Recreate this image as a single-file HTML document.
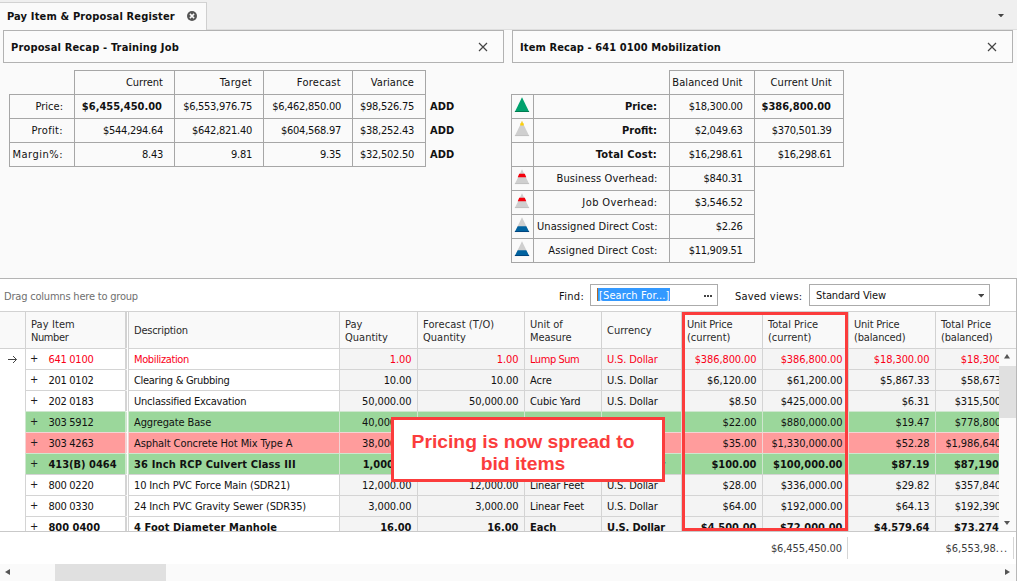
<!DOCTYPE html>
<html>
<head>
<meta charset="utf-8">
<title>Pay Item &amp; Proposal Register</title>
<style>
*{box-sizing:border-box;margin:0;padding:0}
html,body{width:1017px;height:581px;overflow:hidden}
body{position:relative;background:#fafafa;font-family:"DejaVu Sans Condensed","Liberation Sans",sans-serif;font-size:11px;color:#111;line-height:13px}
.abs,.c,.h,.d,.ln{position:absolute}
.b{font-weight:bold}
#strip{left:0;top:0;width:1017px;height:30px;background:#efefef;border-bottom:1px solid #dedede}
#tab{left:0;top:2px;width:207px;height:28px;background:#fafafa;border-top:1px solid #d2d2d2;border-right:1px solid #cfcfcf}
#tab span{position:absolute;left:7px;top:7px;font-weight:bold;white-space:nowrap;letter-spacing:.16px}
.panel{height:33px;background:#fbfbfb;border:1px solid #b2b2b2}
.panel span{position:absolute;top:10px;font-weight:bold;white-space:nowrap}
/* recap cells */
.c{height:25px;border:1px solid #a6a6a6;white-space:nowrap;text-align:right;padding:5px 10px 0 0;overflow:hidden}
.i{padding-right:11.4px}
.i.b{padding-right:12px}
.p{padding-right:11px}
.p.b{padding-right:12px}
.n{letter-spacing:-.27px}
.gn{letter-spacing:-.1px}
.t{letter-spacing:-.25px}
.nb{letter-spacing:0}
.add{font-weight:bold;white-space:nowrap}
/* grid */
#grid{left:0;top:278px;width:1017px;height:303px;background:#fff;border-top:1px solid #b4b4b4;border-right:1px solid #b8b8b8;overflow:hidden}
.h{top:33px;height:37px;background:#f9f9f9;border-left:1px solid #d2d2d2;border-top:1px solid #d2d2d2;padding:6px 0 0 5px;white-space:nowrap;overflow:hidden;color:#2a2a2a}
.h.one{padding-top:12px}
.d{height:22px;border-left:1px solid #d4d4d4;border-top:1px solid #d4d4d4;padding:4px 6px 0 5px;white-space:nowrap;overflow:hidden}
.r{text-align:right;padding-right:5.5px}
.g{background:#f4f4f4}
.red{color:#fa0018}
.grn .d{background:#9bd79b;border-color:#cfe6cf}
.pnk .d{background:#ff9c9c;border-color:#f3d4d4}
.row{position:absolute;left:0;width:1017px;height:22px}
.plus{position:absolute;left:4px;top:3px;font-size:11px;font-weight:normal;letter-spacing:0}
</style>
</head>
<body>
<div id="strip" class="abs"></div>
<div id="tab" class="abs"><span>Pay Item &amp; Proposal Register</span><svg class="abs" style="left:186px;top:7px" width="12" height="12" viewBox="0 0 12 12"><circle cx="6" cy="6" r="5" fill="#555"/><path d="M3.9 3.9l4.2 4.2M8.1 3.9l-4.2 4.2" stroke="#fafafa" stroke-width="1.5"/></svg></div>
<svg class="abs" style="left:998.3px;top:14px" width="6" height="3.4" viewBox="0 0 6 3.4"><path d="M0 0h6L3 3.4z" fill="#444"/></svg>
<div class="abs panel" style="left:3px;top:30px;width:501px"><span style="left:7px;letter-spacing:.16px">Proposal Recap - Training Job</span><svg class="abs" style="left:474px;top:11px" width="10" height="10" viewBox="0 0 10 10"><path d="M1 1l8 8M9 1l-8 8" stroke="#444" stroke-width="1.2"/></svg></div>
<div class="abs panel" style="left:512px;top:30px;width:501px"><span style="left:7px;letter-spacing:.11px">Item Recap - 641 0100 Mobilization</span><svg class="abs" style="left:474px;top:11px" width="10" height="10" viewBox="0 0 10 10"><path d="M1 1l8 8M9 1l-8 8" stroke="#444" stroke-width="1.2"/></svg></div>
<div class="c p" style="left:74px;top:70px;width:101px">Current</div>
<div class="c p" style="left:174px;top:70px;width:90px;letter-spacing:0.3px">Target</div>
<div class="c p" style="left:263px;top:70px;width:90px;letter-spacing:0.3px">Forecast</div>
<div class="c p" style="left:352px;top:70px;width:74px;letter-spacing:0.07px">Variance</div>
<div class="c p" style="left:9px;top:94px;width:66px">Price:</div>
<div class="c p b nb" style="left:74px;top:94px;width:101px">$6,455,450.00</div>
<div class="c p n" style="left:174px;top:94px;width:90px">$6,553,976.75</div>
<div class="c p n" style="left:263px;top:94px;width:90px">$6,462,850.00</div>
<div class="c p n" style="left:352px;top:94px;width:74px">$98,526.75</div>
<div class="abs add" style="left:430px;top:100px">ADD</div>
<div class="c p" style="left:9px;top:118px;width:66px;letter-spacing:0.35px">Profit:</div>
<div class="c p n" style="left:74px;top:118px;width:101px">$544,294.64</div>
<div class="c p n" style="left:174px;top:118px;width:90px">$642,821.40</div>
<div class="c p n" style="left:263px;top:118px;width:90px">$604,568.97</div>
<div class="c p n" style="left:352px;top:118px;width:74px">$38,252.43</div>
<div class="abs add" style="left:430px;top:124px">ADD</div>
<div class="c p" style="left:9px;top:142px;width:66px;letter-spacing:0.5px">Margin%:</div>
<div class="c p n" style="left:74px;top:142px;width:101px">8.43</div>
<div class="c p n" style="left:174px;top:142px;width:90px">9.81</div>
<div class="c p n" style="left:263px;top:142px;width:90px">9.35</div>
<div class="c p n" style="left:352px;top:142px;width:74px">$32,502.50</div>
<div class="abs add" style="left:430px;top:148px">ADD</div>
<div class="c i" style="left:669px;top:70px;width:86px;letter-spacing:0.1px">Balanced Unit</div>
<div class="c i" style="left:754px;top:70px;width:90px;letter-spacing:0.05px">Current Unit</div>
<div class="c" style="left:511px;top:94px;width:23px;padding:0"><svg class="abs" style="left:2px;top:2px" width="16" height="16" viewBox="0 0 16 16"><path d="M8 0.3L15.2 15H0.8z" fill="#00a16d"/><path d="M0.9 14.5h14.2" stroke="#007c50" stroke-width="1"/></svg></div>
<div class="c i b" style="left:533px;top:94px;width:137px">Price:</div>
<div class="c i n" style="left:669px;top:94px;width:86px">$18,300.00</div>
<div class="c i b nb" style="left:754px;top:94px;width:90px">$386,800.00</div>
<div class="c" style="left:511px;top:118px;width:23px;padding:0"><svg class="abs" style="left:2px;top:2px" width="16" height="16" viewBox="0 0 16 16"><path d="M8 0.3L15.2 15H0.8z" fill="#cfcfcf"/><path d="M0.9 14.6h14.2" stroke="#bcbcbc" stroke-width=".8"/><path d="M7.4 0.6h1.2v1.6h1.1v2.4H6.3V2.2h1.1z" fill="#ffd000"/></svg></div>
<div class="c i b" style="left:533px;top:118px;width:137px">Profit:</div>
<div class="c i n" style="left:669px;top:118px;width:86px">$2,049.63</div>
<div class="c i n" style="left:754px;top:118px;width:90px">$370,501.39</div>
<div class="c" style="left:511px;top:142px;width:23px;padding:0"></div>
<div class="c i b" style="left:533px;top:142px;width:137px;letter-spacing:0.2px">Total Cost:</div>
<div class="c i n" style="left:669px;top:142px;width:86px">$16,298.61</div>
<div class="c i n" style="left:754px;top:142px;width:90px">$16,298.61</div>
<div class="c" style="left:511px;top:166px;width:23px;padding:0"><svg class="abs" style="left:2px;top:2px" width="16" height="16" viewBox="0 0 16 16"><path d="M8 0.3L15.2 15H0.8z" fill="#cfcfcf"/><path d="M0.9 14.6h14.2" stroke="#bcbcbc" stroke-width=".8"/><path d="M5.2 4.7H10.8L12.3 8.2H3.7z" fill="#f4000c"/></svg></div>
<div class="c i" style="left:533px;top:166px;width:137px;letter-spacing:0.15px">Business Overhead:</div>
<div class="c i n" style="left:669px;top:166px;width:86px">$840.31</div>
<div class="c" style="left:511px;top:190px;width:23px;padding:0"><svg class="abs" style="left:2px;top:2px" width="16" height="16" viewBox="0 0 16 16"><path d="M8 0.3L15.2 15H0.8z" fill="#cfcfcf"/><path d="M0.9 14.6h14.2" stroke="#bcbcbc" stroke-width=".8"/><path d="M5.2 4.7H10.8L12.3 8.2H3.7z" fill="#f4000c"/></svg></div>
<div class="c i" style="left:533px;top:190px;width:137px;letter-spacing:0.4px">Job Overhead:</div>
<div class="c i n" style="left:669px;top:190px;width:86px">$3,546.52</div>
<div class="c" style="left:511px;top:214px;width:23px;padding:0"><svg class="abs" style="left:2px;top:2px" width="16" height="16" viewBox="0 0 16 16"><path d="M8 0.3L15.2 15H0.8z" fill="#cfcfcf"/><path d="M0.9 14.6h14.2" stroke="#bcbcbc" stroke-width=".8"/><path d="M3.7 9.2L0.8 15H15.2L12.3 9.2z" fill="#00629f"/><path d="M0.9 14.5h14.2" stroke="#00457f" stroke-width="1"/></svg></div>
<div class="c i" style="left:533px;top:214px;width:137px;letter-spacing:0.08px">Unassigned Direct Cost:</div>
<div class="c i n" style="left:669px;top:214px;width:86px">$2.26</div>
<div class="c" style="left:511px;top:238px;width:23px;padding:0"><svg class="abs" style="left:2px;top:2px" width="16" height="16" viewBox="0 0 16 16"><path d="M8 0.3L15.2 15H0.8z" fill="#cfcfcf"/><path d="M0.9 14.6h14.2" stroke="#bcbcbc" stroke-width=".8"/><path d="M3.7 9.2L0.8 15H15.2L12.3 9.2z" fill="#00629f"/><path d="M0.9 14.5h14.2" stroke="#00457f" stroke-width="1"/></svg></div>
<div class="c i" style="left:533px;top:238px;width:137px;letter-spacing:0.16px">Assigned Direct Cost:</div>
<div class="c i n" style="left:669px;top:238px;width:86px">$11,909.51</div>
<div id="grid" class="abs">
<div class="abs" style="left:4px;top:11px;color:#6f6f6f;white-space:nowrap;letter-spacing:-.2px">Drag columns here to group</div>
<div class="abs" style="left:559px;top:11px;white-space:nowrap;letter-spacing:.3px">Find:</div>
<div class="abs" style="left:590px;top:5px;width:128px;height:22px;border:1px solid #ababab;background:#fff"><span class="abs" style="left:6px;top:3px;height:13px;line-height:13px;background:#3399ff;color:#fff;white-space:nowrap;padding:1px 1px 0 1px;border-left:1px solid #b06a2a;letter-spacing:.12px">[Search For...]</span><span class="abs" style="left:113px;top:10px;width:2px;height:2px;background:#444;box-shadow:3px 0 0 #444,6px 0 0 #444"></span></div>
<div class="abs" style="left:735px;top:11px;white-space:nowrap;letter-spacing:.19px">Saved views:</div>
<div class="abs" style="left:809px;top:5px;width:181px;height:22px;border:1px solid #ababab;background:#fff"><span class="abs" style="left:6px;top:4px;white-space:nowrap;letter-spacing:-.13px">Standard View</span><svg class="abs" style="left:167.5px;top:9px" width="6.4" height="3.6" viewBox="0 0 6.4 3.6"><path d="M0 0h6.4L3.2 3.6z" fill="#444"/></svg></div>
<div class="h" style="left:-1px;top:32px;width:26px"></div>
<div class="h" style="left:25px;top:32px;width:100px"><span style="letter-spacing:0.1px">Pay Item</span><br><span style="letter-spacing:-0.4px">Number</span></div>
<div class="h one" style="left:128px;top:32px;width:211px"><span style="letter-spacing:-0.24px">Description</span></div>
<div class="h" style="left:339px;top:32px;width:78px">Pay<br>Quantity</div>
<div class="h" style="left:417px;top:32px;width:107px"><span style="letter-spacing:0.1px">Forecast (T/O)</span><br>Quantity</div>
<div class="h" style="left:524px;top:32px;width:77px">Unit of<br><span style="letter-spacing:-0.09px">Measure</span></div>
<div class="h one" style="left:601px;top:32px;width:80px">Currency</div>
<div class="h" style="left:681px;top:32px;width:81px"><span style="letter-spacing:-0.2px">Unit Price</span><br>(current)</div>
<div class="h" style="left:762px;top:32px;width:86px">Total Price<br>(current)</div>
<div class="h" style="left:848px;top:32px;width:87px"><span style="letter-spacing:-0.2px">Unit Price</span><br><span style="letter-spacing:-0.16px">(balanced)</span></div>
<div class="h" style="left:935px;top:32px;width:87px">Total Price<br><span style="letter-spacing:-0.16px">(balanced)</span></div>
<div class="abs" style="left:0;top:69px;width:1016px;height:1px;background:#d2d2d2"></div>
<div class="h" style="left:125px;top:32px;width:3px;padding:0;background:#fff;border-left-width:2px"></div>
<div class="abs" style="left:0;top:69px;width:1016px;height:183px;overflow:hidden">
<div class="row  red" style="top:0px">
<svg class="abs" style="left:8px;top:7px" width="10" height="9" viewBox="0 0 10 9"><path d="M0 4.5h8.4M5 1L8.5 4.5L5 8" stroke="#444" stroke-width="1" fill="none"/></svg>
<div class="d n" style="left:25px;width:100px;padding-left:22.4px"><span class="plus" style="color:#1c1c1c">+</span>641 0100</div>
<div class="d" style="left:125px;width:3px;padding:0;background:#fff;border-top-color:#fff;border-left-width:2px"></div>
<div class="d  t" style="left:128px;width:211px;letter-spacing:-0.37px">Mobilization</div>
<div class="d r g gn" style="left:339px;width:78px">1.00</div>
<div class="d r g gn" style="left:417px;width:107px">1.00</div>
<div class="d g t" style="left:524px;width:77px;letter-spacing:-0.45px">Lump Sum</div>
<div class="d g t" style="left:601px;width:80px;letter-spacing:-0.14px">U.S. Dollar</div>
<div class="d r g gn" style="left:681px;width:81px">$386,800.00</div>
<div class="d r g gn" style="left:762px;width:86px">$386,800.00</div>
<div class="d r g gn" style="left:848px;width:87px">$18,300.00</div>
<div class="d r g gn" style="left:935px;width:87px">$18,300.00</div>
</div>
<div class="row  " style="top:21px">
<div class="d n" style="left:25px;width:100px;padding-left:22.4px"><span class="plus" style="color:#1c1c1c">+</span>201 0102</div>
<div class="d" style="left:125px;width:3px;padding:0;background:#fff;border-top-color:#fff;border-left-width:2px"></div>
<div class="d  t" style="left:128px;width:211px;letter-spacing:-0.3px">Clearing &amp; Grubbing</div>
<div class="d r g gn" style="left:339px;width:78px">10.00</div>
<div class="d r g gn" style="left:417px;width:107px">10.00</div>
<div class="d g t" style="left:524px;width:77px;letter-spacing:-0.06px">Acre</div>
<div class="d g t" style="left:601px;width:80px;letter-spacing:-0.14px">U.S. Dollar</div>
<div class="d r g gn" style="left:681px;width:81px">$6,120.00</div>
<div class="d r g gn" style="left:762px;width:86px">$61,200.00</div>
<div class="d r g gn" style="left:848px;width:87px">$5,867.33</div>
<div class="d r g gn" style="left:935px;width:87px">$58,673.30</div>
</div>
<div class="row  " style="top:42px">
<div class="d n" style="left:25px;width:100px;padding-left:22.4px"><span class="plus" style="color:#1c1c1c">+</span>202 0183</div>
<div class="d" style="left:125px;width:3px;padding:0;background:#fff;border-top-color:#fff;border-left-width:2px"></div>
<div class="d  t" style="left:128px;width:211px;letter-spacing:-0.2px">Unclassified Excavation</div>
<div class="d r g gn" style="left:339px;width:78px">50,000.00</div>
<div class="d r g gn" style="left:417px;width:107px">50,000.00</div>
<div class="d g t" style="left:524px;width:77px;letter-spacing:-0.12px">Cubic Yard</div>
<div class="d g t" style="left:601px;width:80px;letter-spacing:-0.14px">U.S. Dollar</div>
<div class="d r g gn" style="left:681px;width:81px">$8.50</div>
<div class="d r g gn" style="left:762px;width:86px">$425,000.00</div>
<div class="d r g gn" style="left:848px;width:87px">$6.31</div>
<div class="d r g gn" style="left:935px;width:87px">$315,500.00</div>
</div>
<div class="row grn " style="top:63px">
<div class="d n" style="left:25px;width:100px;padding-left:22.4px"><span class="plus" style="color:#1c1c1c">+</span>303 5912</div>
<div class="d" style="left:125px;width:3px;padding:0;background:#fff;border-top-color:#fff;border-left-width:2px"></div>
<div class="d  t" style="left:128px;width:211px;letter-spacing:-0.12px">Aggregate Base</div>
<div class="d r g gn" style="left:339px;width:78px">40,000.00</div>
<div class="d r g gn" style="left:417px;width:107px">40,000.00</div>
<div class="d g t" style="left:524px;width:77px">Ton</div>
<div class="d g t" style="left:601px;width:80px;letter-spacing:-0.14px">U.S. Dollar</div>
<div class="d r g gn" style="left:681px;width:81px">$22.00</div>
<div class="d r g gn" style="left:762px;width:86px">$880,000.00</div>
<div class="d r g gn" style="left:848px;width:87px">$19.47</div>
<div class="d r g gn" style="left:935px;width:87px">$778,800.00</div>
</div>
<div class="row pnk " style="top:84px">
<div class="d n" style="left:25px;width:100px;padding-left:22.4px"><span class="plus" style="color:#1c1c1c">+</span>303 4263</div>
<div class="d" style="left:125px;width:3px;padding:0;background:#fff;border-top-color:#fff;border-left-width:2px"></div>
<div class="d  t" style="left:128px;width:211px;letter-spacing:-0.09px">Asphalt Concrete Hot Mix Type A</div>
<div class="d r g gn" style="left:339px;width:78px">38,000.00</div>
<div class="d r g gn" style="left:417px;width:107px">38,000.00</div>
<div class="d g t" style="left:524px;width:77px">Ton</div>
<div class="d g t" style="left:601px;width:80px;letter-spacing:-0.14px">U.S. Dollar</div>
<div class="d r g gn" style="left:681px;width:81px">$35.00</div>
<div class="d r g gn" style="left:762px;width:86px">$1,330,000.00</div>
<div class="d r g gn" style="left:848px;width:87px">$52.28</div>
<div class="d r g gn" style="left:935px;width:87px">$1,986,640.00</div>
</div>
<div class="row grn b" style="top:105px">
<div class="d" style="left:25px;width:100px;padding-left:22.4px"><span class="plus" style="color:#1c1c1c">+</span>413(B) 0464</div>
<div class="d" style="left:125px;width:3px;padding:0;background:#fff;border-top-color:#fff;border-left-width:2px"></div>
<div class="d " style="left:128px;width:211px;letter-spacing:0.15px">36 Inch RCP Culvert Class III</div>
<div class="d r g" style="left:339px;width:78px">1,000.00</div>
<div class="d r g" style="left:417px;width:107px">1,000.00</div>
<div class="d g" style="left:524px;width:77px;letter-spacing:-0.09px">Linear Feet</div>
<div class="d g" style="left:601px;width:80px;letter-spacing:-0.14px">U.S. Dollar</div>
<div class="d r g" style="left:681px;width:81px">$100.00</div>
<div class="d r g" style="left:762px;width:86px">$100,000.00</div>
<div class="d r g" style="left:848px;width:87px">$87.19</div>
<div class="d r g" style="left:935px;width:87px">$87,190.00</div>
</div>
<div class="row  " style="top:126px">
<div class="d n" style="left:25px;width:100px;padding-left:22.4px"><span class="plus" style="color:#1c1c1c">+</span>800 0220</div>
<div class="d" style="left:125px;width:3px;padding:0;background:#fff;border-top-color:#fff;border-left-width:2px"></div>
<div class="d  t" style="left:128px;width:211px;letter-spacing:-0.14px">10 Inch PVC Force Main (SDR21)</div>
<div class="d r g gn" style="left:339px;width:78px">12,000.00</div>
<div class="d r g gn" style="left:417px;width:107px">12,000.00</div>
<div class="d g t" style="left:524px;width:77px;letter-spacing:-0.09px">Linear Feet</div>
<div class="d g t" style="left:601px;width:80px;letter-spacing:-0.14px">U.S. Dollar</div>
<div class="d r g gn" style="left:681px;width:81px">$28.00</div>
<div class="d r g gn" style="left:762px;width:86px">$336,000.00</div>
<div class="d r g gn" style="left:848px;width:87px">$29.82</div>
<div class="d r g gn" style="left:935px;width:87px">$357,840.00</div>
</div>
<div class="row  " style="top:147px">
<div class="d n" style="left:25px;width:100px;padding-left:22.4px"><span class="plus" style="color:#1c1c1c">+</span>800 0330</div>
<div class="d" style="left:125px;width:3px;padding:0;background:#fff;border-top-color:#fff;border-left-width:2px"></div>
<div class="d  t" style="left:128px;width:211px;letter-spacing:-0.14px">24 Inch PVC Gravity Sewer (SDR35)</div>
<div class="d r g gn" style="left:339px;width:78px">3,000.00</div>
<div class="d r g gn" style="left:417px;width:107px">3,000.00</div>
<div class="d g t" style="left:524px;width:77px;letter-spacing:-0.09px">Linear Feet</div>
<div class="d g t" style="left:601px;width:80px;letter-spacing:-0.14px">U.S. Dollar</div>
<div class="d r g gn" style="left:681px;width:81px">$64.00</div>
<div class="d r g gn" style="left:762px;width:86px">$192,000.00</div>
<div class="d r g gn" style="left:848px;width:87px">$64.13</div>
<div class="d r g gn" style="left:935px;width:87px">$192,390.00</div>
</div>
<div class="row  b" style="top:168px">
<div class="d" style="left:25px;width:100px;padding-left:22.4px"><span class="plus" style="color:#1c1c1c">+</span>800 0400</div>
<div class="d" style="left:125px;width:3px;padding:0;background:#fff;border-top-color:#fff;border-left-width:2px"></div>
<div class="d " style="left:128px;width:211px;letter-spacing:0.09px">4 Foot Diameter Manhole</div>
<div class="d r g" style="left:339px;width:78px">16.00</div>
<div class="d r g" style="left:417px;width:107px">16.00</div>
<div class="d g" style="left:524px;width:77px">Each</div>
<div class="d g" style="left:601px;width:80px;letter-spacing:-0.14px">U.S. Dollar</div>
<div class="d r g" style="left:681px;width:81px">$4,500.00</div>
<div class="d r g" style="left:762px;width:86px">$72,000.00</div>
<div class="d r g" style="left:848px;width:87px">$4,579.64</div>
<div class="d r g" style="left:935px;width:87px">$73,274.24</div>
</div>
</div>
<div class="abs" style="left:999px;top:70px;width:17px;height:182px;background:#fafafa"><div class="abs" style="left:0;top:17px;width:17px;height:52px;background:#e0e0e0"></div><svg class="abs" style="left:5px;top:5px" width="6" height="4.5" viewBox="0 0 6 4.5"><path d="M0 4.5h6L3 0z" fill="#555"/></svg><svg class="abs" style="left:5px;top:171.5px" width="6" height="4" viewBox="0 0 6 4"><path d="M0 0h6L3 4z" fill="#555"/></svg></div>
<div class="abs" style="left:0;top:252px;width:1016px;height:33px;background:#fff;border-top:1px solid #c9c9c9"></div>
<div class="abs gn" style="left:700px;width:142px;text-align:right;top:263px;color:#3c3c3c;white-space:nowrap">$6,455,450.00</div>
<div class="abs" style="left:900px;width:108px;text-align:right;top:263px;color:#3c3c3c;white-space:nowrap">$6,553,98<span style="letter-spacing:.9px">...</span></div>
<div class="abs" style="left:847px;top:258px;width:1px;height:22px;background:#d6d6d6"></div>
<div class="abs" style="left:1013px;top:258px;width:1px;height:22px;background:#d6d6d6"></div>
<div class="abs" style="left:0;top:285px;width:1016px;height:17px;background:#fafafa"><div class="abs" style="left:55px;top:0;width:111px;height:17px;background:#e0e0e0"></div><svg class="abs" style="left:5px;top:5px" width="5" height="6" viewBox="0 0 5 6"><path d="M5 0v6L0 3z" fill="#555"/></svg><svg class="abs" style="left:1005px;top:5px" width="5" height="6" viewBox="0 0 5 6"><path d="M0 0v6L5 3z" fill="#555"/></svg></div>
</div>
<div class="abs" style="left:682px;top:312px;width:166px;height:219px;border:3px solid #fb3c3c"></div>
<div class="abs" style="left:391px;top:417px;width:274px;height:65px;border:3px solid #fb3c3c;background:#fff;font-family:'Liberation Sans',sans-serif;font-weight:bold;font-size:19.3px;line-height:22.5px;color:#fb3d3d;text-align:center;padding:11.4px 10px 0 0;white-space:nowrap"><div style="transform:scaleY(.945);transform-origin:50% 50%">Pricing is now spread to<br>bid items</div></div>
</body>
</html>
